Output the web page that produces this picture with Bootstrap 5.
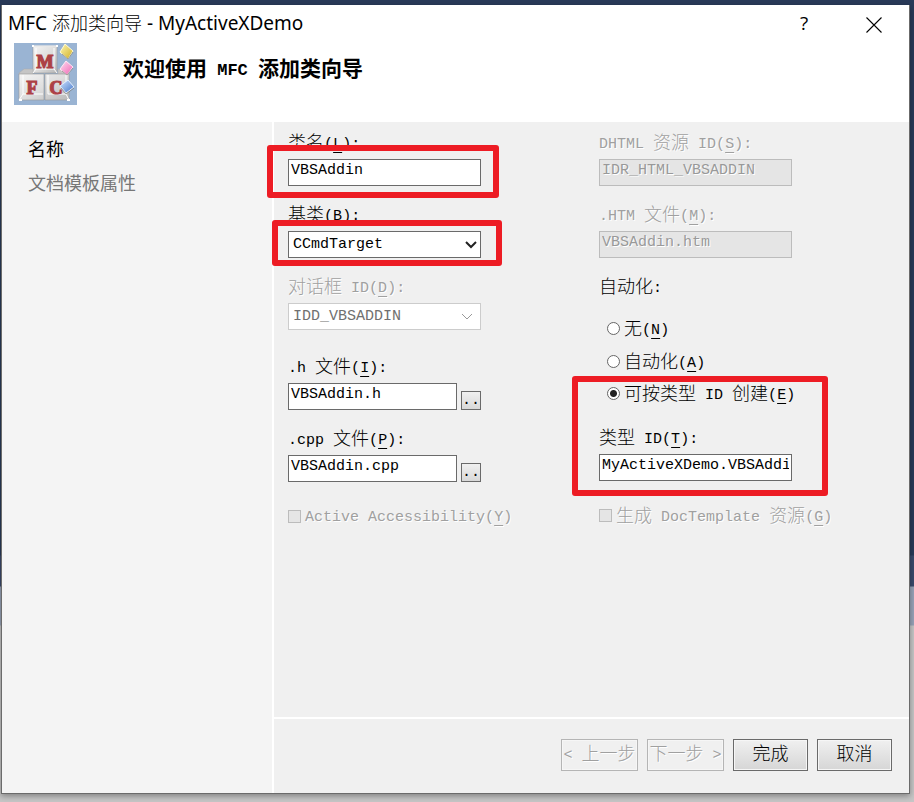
<!DOCTYPE html>
<html lang="zh-CN">
<head>
<meta charset="utf-8">
<meta name="viewport" content="width=device-width, initial-scale=1">
<title>MFC 添加类向导 - MyActiveXDemo</title>
<link href="https://cdn.jsdelivr.net/npm/bootstrap@5.3.0/dist/css/bootstrap.min.css" rel="stylesheet">
<style>
  body {
    min-height: 100vh;
    padding: 5px 4px 8px 1px;
    background: linear-gradient(#293a59 0, #293a59 555px, #3a4a6c 556px, #3a4a6c 586px, #98a3b8 587px, #98a3b8 625px, #c6c6c6 626px);
    font-family: "Liberation Mono", "Noto Sans CJK SC", monospace;
    font-size: 15px;
    line-height: 24px;
    color: #000;
  }
  .zh { font-size: 18px; font-weight: 300; vertical-align: -1px; }
  u { text-underline-offset: 4px; text-decoration-thickness: 1px; }
  .wizard { background: #f0f0f0; border: 1px solid #6b6b6b; border-top: 0; box-shadow: 0 2px 6px rgba(0,0,0,.35); }
  .wizard-head { background: #fff; height: 117px; }
  .title-bar { height: 38px; padding: 0 0 2px 6px; font-family: "Noto Sans", "Noto Sans CJK SC", sans-serif; font-size: 19px; }
  .title-bar .zh { vertical-align: baseline; }
  .title-bar button { width: 70px; height: 36px; border: 0; background: none; font-family: "Open Sans", sans-serif; font-size: 19px; padding: 0; }
  .banner { padding-left: 12px; gap: 46px; }
  .banner h1 { font-size: 17px; font-weight: 700; line-height: 56px; margin: 0; }
  .banner .zh { font-size: 21px; font-weight: 700; }
  .steps { flex: 0 0 30%; background: #f4f4f4; border-right: 2px solid #fff; padding: 14px 26px; font-family: "Noto Sans CJK SC", sans-serif; font-size: 18px; }
  .steps a { color: #000; text-decoration: none; margin-bottom: 10px; }
  .steps a.later { color: #777; }
  .fields { display: grid; grid-template-columns: repeat(2, minmax(0, 193px)); column-gap: 118px; padding: 10px 14px; align-content: start; }
  .field { margin-bottom: 18px; }
  .field > label, .group-label { display: block; height: 24px; margin-bottom: 3px; white-space: nowrap; }
  .box {
    display: block; width: 100%; height: 27px; min-width: 0; padding: 0 2px 4px; border: 1px solid #6a6a6a; border-radius: 0;
    background-color: #fff; color: #000; font: inherit; line-height: 20px;
  }
  input.box:disabled { background: #e5e5e5; border-color: #bcbcbc; color: #999; text-shadow: 1px 1px #fff; opacity: 1; }
  select.box {
    appearance: none; padding: 0 24px 0 4px; line-height: 24px;
    background-image: url("data:image/svg+xml,%3Csvg xmlns='http://www.w3.org/2000/svg' width='14' height='10'%3E%3Cpath d='M2 2l5 5 5-5' fill='none' stroke='%23222' stroke-width='2'/%3E%3C/svg%3E");
    background-repeat: no-repeat; background-position: right 2px center;
  }
  select.box:disabled {
    color: #707070; border-color: #ccc; opacity: 1; background-position: right 6px center;
    background-image: url("data:image/svg+xml,%3Csvg xmlns='http://www.w3.org/2000/svg' width='14' height='10'%3E%3Cpath d='M2 2l5 5 5-5' fill='none' stroke='%23999'/%3E%3C/svg%3E");
  }
  .browse { flex: none; width: 20px; height: 19px; padding: 0; border: 1px solid #6a6a6a; background: linear-gradient(#f0f0f0, #d8d8d8); line-height: 16px; }
  .off { color: #a0a0a0; text-shadow: 1px 1px #fff; }
  .choice { display: flex; height: 24px; align-items: center; white-space: nowrap; gap: 4px; }
  .choice input { appearance: none; flex: none; width: 13px; height: 13px; margin: 0 0 3px; border: 1px solid #666; background: #fff; }
  .choice input[type=radio] { border-radius: 50%; }
  .choice input[type=radio]:checked { background: radial-gradient(circle, #222 0, #222 3px, #fff 4px); }
  .choice input:disabled { border-color: #bcbcbc; background: #e5e5e5; }
  .radios { padding-left: 8px; gap: 9px; }
  .automation { margin-bottom: 18px; }
  .frame { position: absolute; border: 6px solid #ed1c24; border-radius: 3px; pointer-events: none; z-index: 2; }
  .frame-name { inset: -14px -18px -12px -21px; }
  .frame-base { inset: -11px -21px -8px -16px; }
  .frame-type { inset: -7px -36px -15px -27px; }
  .wizard-foot { border-top: 2px solid #fff; padding: 20px 17px 22px; gap: 9px; }
  .wizard-foot button { width: 75px; height: 32px; padding: 0; border: 1px solid #6a6a6a; background: linear-gradient(#f0f0f0, #d6d6d6); box-shadow: inset 0 0 0 1px #f6f6f6; white-space: pre; color: #000; }
  .wizard-foot button:disabled { width: 77px; border-color: #b5b5b5; background: #f0f0f0; color: #a0a0a0; }
</style>
</head>
<body class="d-flex flex-column">
<div class="wizard d-flex flex-column flex-grow-1">
  <header class="wizard-head">
    <div class="title-bar d-flex align-items-center">
      <span class="me-auto">MFC <span class="zh">添加类向导</span> - MyActiveXDemo</span>
      <button type="button" aria-label="帮助">?</button>
      <button type="button" aria-label="关闭"><svg width="16" height="16" viewBox="0 0 16 16"><path d="M.5.5l15 15M15.5.5l-15 15" stroke="#000" stroke-width="1.1"/></svg></button>
    </div>
    <div class="banner d-flex">
      <svg width="63" height="62" viewBox="0 0 63 62" aria-hidden="true">
        <defs>
          <linearGradient id="face" x2="1" y2="1"><stop stop-color="#f4f4f4"/><stop offset=".5" stop-color="#dedede"/><stop offset="1" stop-color="#b9b9b9"/></linearGradient>
          <linearGradient id="gold" x2="1" y2="1"><stop stop-color="#fff7b0"/><stop offset="1" stop-color="#cfae24"/></linearGradient>
          <linearGradient id="pink" x2="1" y2="1"><stop stop-color="#ffe0f2"/><stop offset="1" stop-color="#ee62b2"/></linearGradient>
          <linearGradient id="blue" x2="1" y2="1"><stop stop-color="#d4e6ff"/><stop offset="1" stop-color="#3f74c8"/></linearGradient>
        </defs>
        <path fill="#9ab4d3" d="M0 0h63v62H0z"/>
        <path fill="url(#face)" stroke="#999" stroke-width=".6" d="M19 3h24v27H19z"/>
        <path fill="#c5c5c5" stroke="#aaa" stroke-width=".5" d="M5 30l5-4h9v6H5zM44 26h7l4 4v2H44z"/>
        <path fill="url(#face)" stroke="#999" stroke-width=".6" d="M5 31h25v26H5zM31 31h24v26H31z"/>
        <path fill="none" stroke="#fff" d="M19 3h24M22 5v21h18V5M19 30l3-4m18 0l3 4M9 32v19h20M34 32v19h18V32M9 51l-4 6M52 51l3 6"/>
        <path fill="#fff" d="M5 56h3v2H5zM53 56h3v2h-3zM18 2h2v2h-2zM42 2h2v2h-2z"/>
        <g font-family="Liberation Serif, serif" font-weight="700" font-size="18" fill="#ad4146" stroke="#ad4146" stroke-width="1.2" text-anchor="middle">
          <text x="31" y="25">M</text><text x="18" y="51">F</text><text x="42" y="51">C</text>
        </g>
        <path fill="url(#gold)" stroke="#fffbd8" d="M51 1l8 7-5 8-8-7z"/>
        <path fill="url(#pink)" stroke="#ffe9f5" d="M52 18l7 6-6 8-7-6z"/>
        <path fill="url(#blue)" stroke="#e2eeff" d="M54 37l6 7-8 6-6-7z"/>
        <path fill="none" stroke="#6c6a62" stroke-width=".6" d="M59 9l-5 7-6-5M59 25l-6 7-5-4M60 45l-8 6-5-6"/>
      </svg>
      <h1><span class="zh">欢迎使用</span> MFC <span class="zh">添加类向导</span></h1>
    </div>
  </header>

  <div class="d-flex flex-grow-1">
    <nav class="steps d-flex flex-column" aria-label="步骤">
      <a href="#name">名称</a>
      <a href="#template" class="later">文档模板属性</a>
    </nav>

    <form class="d-flex flex-column flex-grow-1" id="name">
      <div class="fields flex-grow-1">
        <div>
          <div class="field">
            <label for="cls"><span class="zh">类名</span>(<u>L</u>):</label>
            <div class="position-relative"><input class="box" id="cls" type="text" value="VBSAddin"><span class="frame frame-name"></span></div>
          </div>
          <div class="field">
            <label for="base"><span class="zh">基类</span>(<u>B</u>):</label>
            <div class="position-relative"><select class="box" id="base"><option>CCmdTarget</option></select><span class="frame frame-base"></span></div>
          </div>
          <div class="field">
            <label for="dlg" class="off"><span class="zh">对话框</span> ID(<u>D</u>):</label>
            <select class="box" id="dlg" disabled><option>IDD_VBSADDIN</option></select>
          </div>
          <div class="field pt-2">
            <label for="hfile">.h <span class="zh">文件</span>(<u>I</u>):</label>
            <div class="d-flex align-items-end gap-1"><input class="box" id="hfile" type="text" value="VBSAddin.h"><button type="button" class="browse" aria-label="浏览 .h 文件">..</button></div>
          </div>
          <div class="field">
            <label for="cfile">.cpp <span class="zh">文件</span>(<u>P</u>):</label>
            <div class="d-flex align-items-end gap-1"><input class="box" id="cfile" type="text" value="VBSAddin.cpp"><button type="button" class="browse" aria-label="浏览 .cpp 文件">..</button></div>
          </div>
          <label class="choice off mt-4"><input type="checkbox" disabled><span>Active Accessibility(<u>Y</u>)</span></label>
        </div>

        <div>
          <div class="field">
            <label for="dhtml" class="off">DHTML <span class="zh">资源</span> ID(<u>S</u>):</label>
            <input class="box" id="dhtml" type="text" value="IDR_HTML_VBSADDIN" disabled>
          </div>
          <div class="field">
            <label for="htm" class="off">.HTM <span class="zh">文件</span>(<u>M</u>):</label>
            <input class="box" id="htm" type="text" value="VBSAddin.htm" disabled>
          </div>
          <div class="group-label automation"><span class="zh">自动化</span>:</div>
          <div class="radios d-flex flex-column">
            <label class="choice"><input type="radio" name="auto"><span><span class="zh">无</span>(<u>N</u>)</span></label>
            <label class="choice"><input type="radio" name="auto"><span><span class="zh">自动化</span>(<u>A</u>)</span></label>
          </div>
          <div class="position-relative mt-2">
            <div class="radios">
              <label class="choice"><input type="radio" name="auto" checked><span><span class="zh">可按类型</span> ID <span class="zh">创建</span>(<u>E</u>)</span></label>
            </div>
            <div class="mt-3 pt-1">
              <div class="field mb-4">
                <label for="typeid"><span class="zh">类型</span> ID(<u>T</u>):</label>
                <input class="box" id="typeid" type="text" value="MyActiveXDemo.VBSAddin">
              </div>
            </div>
            <span class="frame frame-type"></span>
          </div>
          <label class="choice off"><input type="checkbox" disabled><span><span class="zh">生成</span> DocTemplate <span class="zh">资源</span>(<u>G</u>)</span></label>
        </div>
      </div>

      <footer class="wizard-foot d-flex justify-content-end">
        <button type="button" disabled class="off">&lt; <span class="zh">上一步</span></button>
        <button type="button" disabled class="off"><span class="zh">下一步</span> &gt;</button>
        <button type="submit"><span class="zh">完成</span></button>
        <button type="button"><span class="zh">取消</span></button>
      </footer>
    </form>
  </div>
</div>
<script src="https://cdn.jsdelivr.net/npm/bootstrap@5.3.0/dist/js/bootstrap.bundle.min.js"></script>
</body>
</html>
